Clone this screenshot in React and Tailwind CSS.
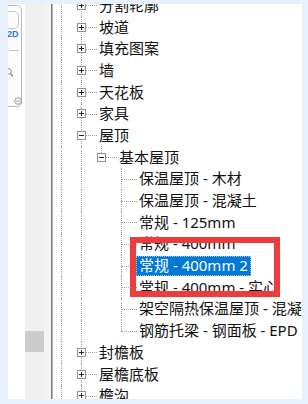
import React from 'react';

const rows = [
  { level: 1, label: '分割轮廓', box: 'plus' },
  { level: 1, label: '坡道', box: 'plus' },
  { level: 1, label: '填充图案', box: 'plus' },
  { level: 1, label: '墙', box: 'plus' },
  { level: 1, label: '天花板', box: 'plus' },
  { level: 1, label: '家具', box: 'plus' },
  { level: 1, label: '屋顶', box: 'minus' },
  { level: 2, label: '基本屋顶', box: 'minus' },
  { level: 3, label: '保温屋顶 - 木材' },
  { level: 3, label: '保温屋顶 - 混凝土' },
  { level: 3, label: '常规 - 125mm' },
  { level: 3, label: '常规 - 400mm' },
  { level: 3, label: '常规 - 400mm 2', selected: true },
  { level: 3, label: '常规 - 400mm - 实心' },
  { level: 3, label: '架空隔热保温屋顶 - 混凝土' },
  { level: 3, label: '钢筋托梁 - 钢面板 - EPD', last: true },
  { level: 1, label: '封檐板', box: 'plus' },
  { level: 1, label: '屋檐底板', box: 'plus' },
  { level: 1, label: '檐沟', box: 'plus' },
];

const indent = { 1: 'pl-[24px]', 2: 'pl-[44px]', 3: 'pl-[86px]' };

function ToggleBox({ kind }) {
  return (
    <svg className="relative shrink-0 mr-[13px]" width="9" height="9" viewBox="0 0 9 9">
      <rect x="0.5" y="0.5" width="8" height="8" fill="#fff" stroke="#919191" />
      <path d="M2 4.5h5" stroke="#222" />
      {kind === 'plus' && <path d="M4.5 2v5" stroke="#222" />}
    </svg>
  );
}

// dotted connector lines sit under the row content
function Lines({ level, last }) {
  const dot = 'absolute border-dotted border-[#a0a0a0]';
  return (
    <>
      <div className={`${dot} top-0 bottom-0 left-[8px] border-l`} />
      <div className={`${dot} top-0 bottom-0 left-[28px] border-l`} />
      {level === 1 && <div className={`${dot} top-1/2 left-[28px] w-[16px] border-t`} />}
      {level === 2 && (
        <>
          <div className={`${dot} top-0 h-1/2 left-[48px] border-l`} />
          <div className={`${dot} top-1/2 left-[48px] w-[16px] border-t`} />
        </>
      )}
      {level === 3 && (
        <>
          <div className={`${dot} top-0 left-[68px] border-l ${last ? 'h-1/2' : 'bottom-0'}`} />
          <div className={`${dot} top-1/2 left-[68px] w-[16px] border-t`} />
        </>
      )}
    </>
  );
}

function TreeRow({ row }) {
  const { level, label, box, selected, last } = row;
  return (
    <div className={`relative h-[21.7px] flex items-center whitespace-nowrap ${selected ? 'pl-[83px]' : indent[level]}`}>
      <Lines level={level} last={last} />
      {box && <ToggleBox kind={box} />}
      {selected ? (
        <span className="relative h-[20px] flex items-center px-[2px] bg-[#0078d7] text-white border border-dotted border-[#9cc8ee]">
          {label}
        </span>
      ) : (
        <span className="relative text-[#111]">{label}</span>
      )}
    </div>
  );
}

function NavBar() {
  return (
    <div className="-ml-[12px] mt-px w-[26px] h-[102px] rounded-r-[5px] border border-[#b9b9b9] bg-[#fcfcfc] flex flex-col pl-[8px]">
      <div className="-ml-[10px] mt-[5px] w-[24px] h-[18px] rounded-r-[5px] border border-[#c9c9c9]" />
      <span
        className="ml-[2px] mt-[1px] text-[9px] leading-none font-bold text-[#2f78cf]"
        style={{ fontFamily: '"Liberation Sans", sans-serif' }}
      >
        2D
      </span>
      <div className="ml-[4px] mt-[11px] w-[10px] h-px bg-[#c6c6c6]" />
      <svg className="mt-[17px]" width="9" height="10" viewBox="0 0 9 10">
        <circle cx="3.5" cy="3.5" r="2.8" fill="none" stroke="#8a8a8a" strokeWidth="1" />
        <path d="M5.5 5.5l2.5 3" stroke="#8a8a8a" strokeWidth="1.2" />
      </svg>
      <svg className="ml-[9px] mt-[19px]" width="8" height="8" viewBox="0 0 8 8">
        <circle cx="4" cy="4" r="3.3" fill="none" stroke="#9a9a9a" />
        <path d="M2.2 4h3.6" stroke="#9a9a9a" />
      </svg>
    </div>
  );
}

export default function App() {
  return (
    <div
      className="w-[308px] h-[404px] bg-[#e8f0fb] pt-[4px] pb-[5px] pl-[8px] pr-[6px] flex text-[15px] leading-none"
      style={{ fontFamily: '"Noto Sans", "Noto Sans CJK SC", sans-serif' }}
    >
      {/* drawing canvas edge with navigation bar */}
      <div className="w-[17px] bg-white overflow-hidden">
        <NavBar />
      </div>

      {/* docking strip */}
      <div className="w-[26px] bg-[#f0f0f0] flex">
        <div className="w-[19px] pt-[327px]">
          <div className="h-[21px] bg-[#cccccc]" />
        </div>
        <div className="flex-1 bg-[#f3f3f3]" />
      </div>
      <div className="w-px bg-[#7c7c7c]" />
      <div className="w-px bg-[#b5b5b5]" />

      {/* project browser tree */}
      <div className="flex-1 bg-white relative overflow-hidden">
        <div className="-mt-[9.5px]">
          {rows.map((row) => (
            <TreeRow key={row.label} row={row} />
          ))}
        </div>
        {/* red annotation frame drawn over the list */}
        <div className="absolute left-[77px] top-[233px] w-[150px] h-[60px] border-[6px] border-[#ee3b3b]" />
      </div>
    </div>
  );
}
